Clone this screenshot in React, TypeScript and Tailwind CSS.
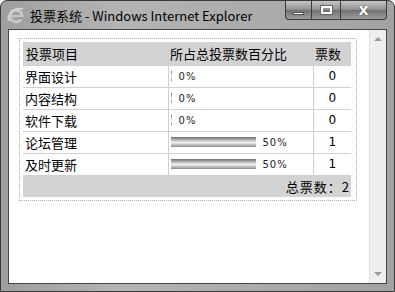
const rows = [
  { name: '界面设计', pct: 0, count: 0 },
  { name: '内容结构', pct: 0, count: 0 },
  { name: '软件下载', pct: 0, count: 0 },
  { name: '论坛管理', pct: 50, count: 1 },
  { name: '及时更新', pct: 50, count: 1 },
]

const cjk = "font-['Noto_Sans_CJK_SC','Noto_Sans',sans-serif]"

function IeLogo() {
  return (
    <svg width="18" height="18" viewBox="0 0 18 18">
      <circle cx="9" cy="10" r="6" fill="none" stroke="#c8c8c8" strokeWidth="3" />
      <rect x="4" y="9" width="10" height="2.2" fill="#c8c8c8" />
      <rect x="11" y="11.2" width="5" height="2" fill="#9c9c9c" />
      <path d="M2 15 C-1 9 8 1 16 3" fill="none" stroke="#d8d8d8" strokeWidth="1.6" />
    </svg>
  )
}

function CaptionButtons() {
  return (
    <div className="flex h-[19px] self-start">
      <div className="flex w-[27px] items-end justify-center rounded-bl-[4px] border border-t-0 border-[#3c3c3c] bg-[linear-gradient(#c6c6c6,#8e8e8e_50%,#707070_51%,#9c9c9c)] pb-[4px]">
        <div className="h-[3px] w-[11px] border border-[#555] bg-white" />
      </div>
      <div className="flex w-[29px] items-center justify-center border border-l-0 border-t-0 border-[#3c3c3c] bg-[linear-gradient(#c6c6c6,#8e8e8e_50%,#707070_51%,#9c9c9c)]">
        <div className="h-[8px] w-[11px] border-2 border-white outline outline-1 outline-[#666]" />
      </div>
      <div className="flex w-[46px] items-center justify-center rounded-br-[4px] border border-l-0 border-t-0 border-[#3c3c3c] bg-[linear-gradient(#c6c6c6,#8e8e8e_50%,#707070_51%,#9c9c9c)]">
        <span className="font-['DejaVu_Sans',sans-serif] text-[13px] font-bold leading-none text-white [text-shadow:0_0_1px_#333]">
          X
        </span>
      </div>
    </div>
  )
}

function Bar({ pct }: { pct: number }) {
  const width = Math.max(1, Math.round((pct / 50) * 85))
  return (
    <div
      className="h-[10px] bg-[linear-gradient(#6e6e6e,#dcdcdc_45%,#f2f2f2_55%,#8a8a8a)]"
      style={{ width }}
    />
  )
}

export default function App() {
  return (
    <div className="flex h-[292px] w-[395px] flex-col rounded-t-[7px] border border-[#3a3a3a] bg-[linear-gradient(90deg,#9e9e9e,#b4b4b4_30%,#a2a2a2)] select-none">
      {/* title bar */}
      <div className="flex h-[28px] shrink-0 items-center pl-[6px] pr-[7px]">
        <IeLogo />
        <span className={`ml-[5px] text-[13px] leading-none text-black ${cjk}`}>
          投票系统 - Windows Internet Explorer
        </span>
        <div className="ml-auto flex h-full items-start">
          <CaptionButtons />
        </div>
      </div>

      {/* client area */}
      <div className="mx-[7px] mb-[7px] flex flex-1 border border-[#444] bg-white">
        <div className="flex-1 px-[10px] pt-[8px]">
          <div className="w-[338px] border border-dotted border-[#b0b0b0] p-[3px]">
            <table className={`w-[328px] border-collapse text-[13px] text-black ${cjk}`}>
              <thead>
                <tr className="h-[23px] bg-[#d3d3d3]">
                  <th className="w-[145px] px-[3px] text-left font-normal">投票项目</th>
                  <th className="w-[145px] px-[2px] text-left font-normal">所占总投票数百分比</th>
                  <th className="px-[2px] text-left font-normal">票数</th>
                </tr>
              </thead>
              <tbody>
                {rows.map((r) => (
                  <tr key={r.name} className="h-[22px]">
                    <td className="border border-l-0 border-[#d0d0d0] px-[2px] leading-none">{r.name}</td>
                    <td className="border border-[#d0d0d0] px-[2px]">
                      <div className="flex items-center">
                        <Bar pct={r.pct} />
                        <span
                          className={`font-['DejaVu_Sans',sans-serif] text-[10px] tracking-[1px] text-[#222] ${
                            r.pct > 0 ? 'ml-[7px]' : 'ml-[7px]'
                          }`}
                        >
                          {r.pct}%
                        </span>
                      </div>
                    </td>
                    <td className="border border-r-0 border-[#d0d0d0] text-center font-['DejaVu_Sans',sans-serif] text-[12px]">
                      {r.count}
                    </td>
                  </tr>
                ))}
              </tbody>
              <tfoot>
                <tr className="h-[22px] bg-[#d3d3d3]">
                  <td colSpan={3} className="pr-[1px] text-right tracking-[1px]">
                    总票数：2
                  </td>
                </tr>
              </tfoot>
            </table>
          </div>
        </div>
        {/* scrollbar */}
        <div className="flex w-[17px] flex-col items-center justify-between border-l border-[#e2e2e2] bg-[#efefef] py-[7px]">
          <div className="h-0 w-0 border-x-[4px] border-b-[4px] border-x-transparent border-b-[#9a9a9a]" />
          <div className="h-0 w-0 border-x-[4px] border-t-[4px] border-x-transparent border-t-[#9a9a9a]" />
        </div>
      </div>
    </div>
  )
}
